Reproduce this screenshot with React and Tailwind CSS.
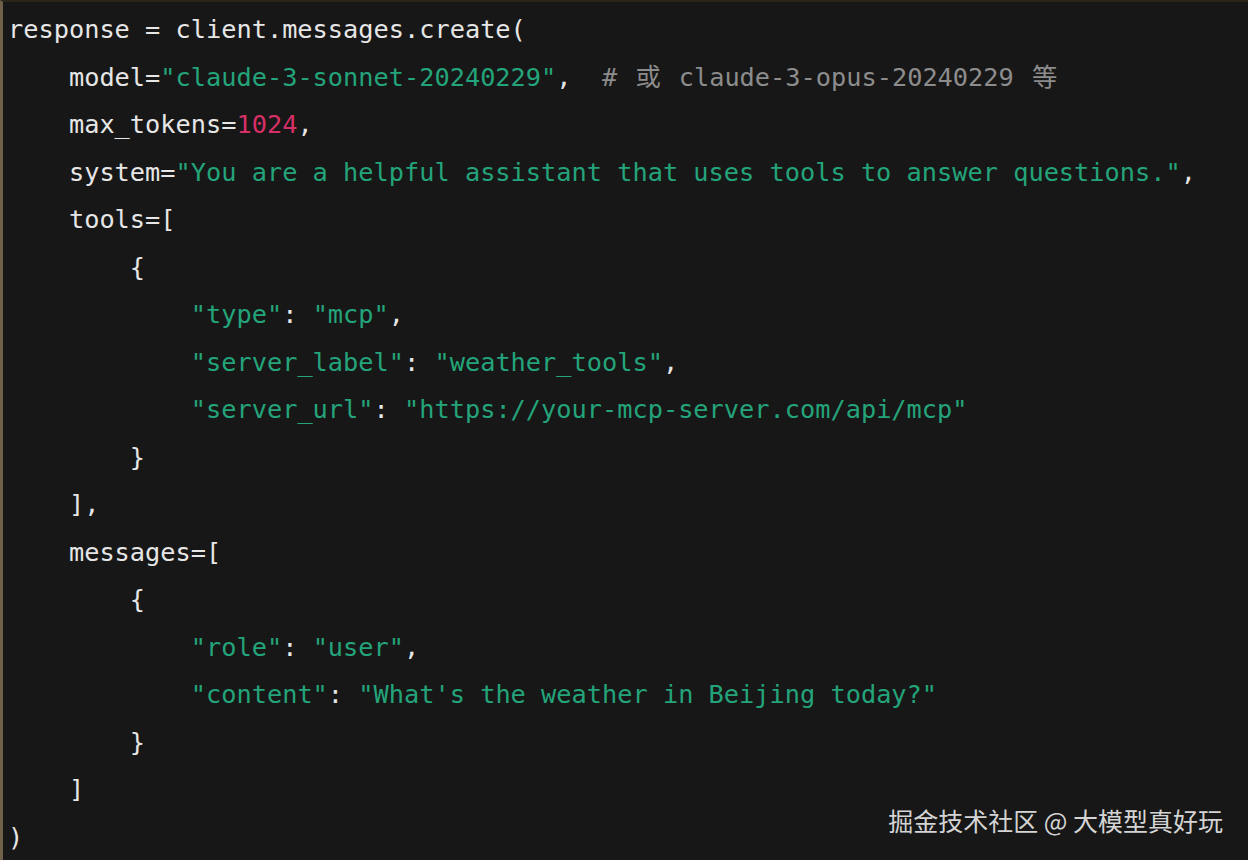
import React from "react";

const W = ({ children }) => <span className="text-[#e6e6e6]">{children}</span>;
const G = ({ children }) => <span className="text-[#24a47a]">{children}</span>;
const C = ({ children }) => <span className="text-[#8c8c8c]">{children}</span>;
const R = ({ children }) => <span className="text-[#d62f66]">{children}</span>;

const lines = [
  [<W key="a">response = client.messages.create(</W>],
  [
    <W key="a">    model=</W>,
    <G key="b">"claude-3-sonnet-20240229"</G>,
    <W key="c">,  </W>,
    <C key="d">
      {"# "}
      <span className="inline-block w-[31px] pl-[3px]">或</span>
      {" claude-3-opus-20240229 "}
      <span className="inline-block pl-[3px]">等</span>
    </C>,
  ],
  [<W key="a">    max_tokens=</W>, <R key="b">1024</R>, <W key="c">,</W>],
  [<W key="a">    system=</W>, <G key="b">"You are a helpful assistant that uses tools to answer questions."</G>, <W key="c">,</W>],
  [<W key="a">    tools=[</W>],
  [<W key="a">        {"{"}</W>],
  [<W key="a">            </W>, <G key="b">"type"</G>, <W key="c">: </W>, <G key="d">"mcp"</G>, <W key="e">,</W>],
  [<W key="a">            </W>, <G key="b">"server_label"</G>, <W key="c">: </W>, <G key="d">"weather_tools"</G>, <W key="e">,</W>],
  [<W key="a">            </W>, <G key="b">"server_url"</G>, <W key="c">: </W>, <G key="d">"https://your-mcp-server.com/api/mcp"</G>],
  [<W key="a">        {"}"}</W>],
  [<W key="a">    ],</W>],
  [<W key="a">    messages=[</W>],
  [<W key="a">        {"{"}</W>],
  [<W key="a">            </W>, <G key="b">"role"</G>, <W key="c">: </W>, <G key="d">"user"</G>, <W key="e">,</W>],
  [<W key="a">            </W>, <G key="b">"content"</G>, <W key="c">: </W>, <G key="d">"What's the weather in Beijing today?"</G>],
  [<W key="a">        {"}"}</W>],
  [<W key="a">    ]</W>],
  [<W key="a">)</W>],
];

export default function App() {
  return (
    <div className="relative h-[860px] w-[1248px] overflow-hidden bg-[#171717] border-l-[3px] border-t-[2px] border-l-[#6e6049] border-t-[#2c2519]">
      <div
        className="pl-[5px] pt-[4px] text-[25.3px] whitespace-pre"
        style={{ fontFamily: '"DejaVu Sans Mono", "Noto Sans CJK SC", monospace' }}
      >
        {lines.map((l, i) => (
          <div key={i} className="h-[47.5px] leading-[47.5px]">
            {l}
          </div>
        ))}
      </div>
      <div
        className="absolute right-[25px] bottom-[21px] text-[25px] text-[#d4d4d4]"
        style={{ fontFamily: '"Noto Sans CJK SC", sans-serif' }}
      >
        掘金技术社区 @ 大模型真好玩
      </div>
    </div>
  );
}
